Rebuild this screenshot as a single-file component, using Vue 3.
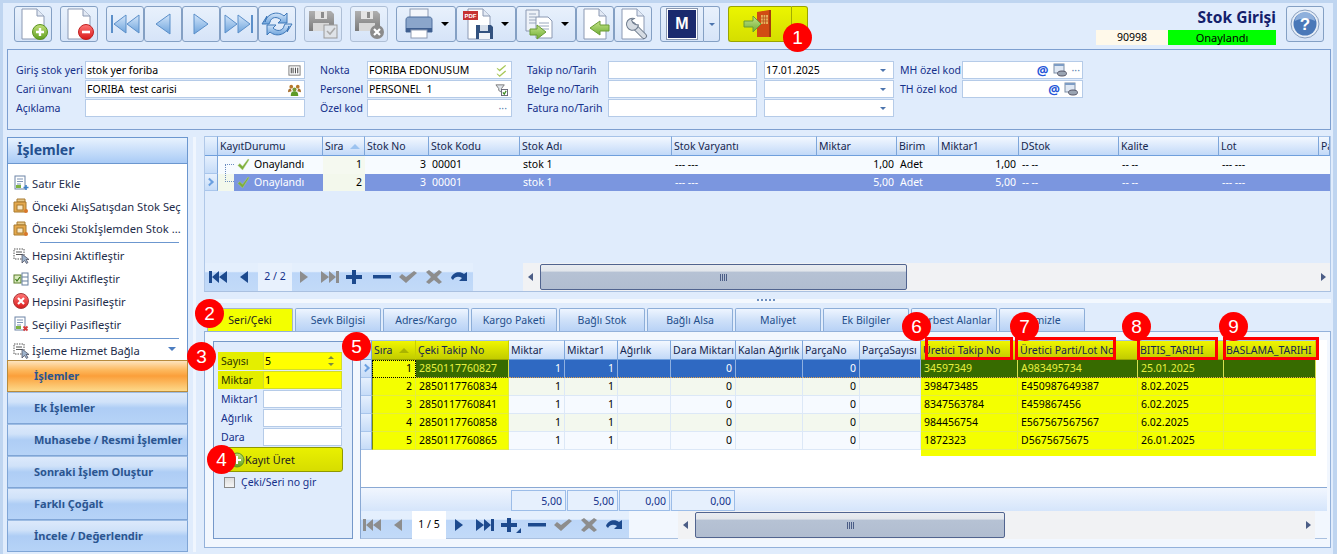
<script setup>
// Columns of the upper grid (stock lines)
const lineCols = [
  { t: 'KayıtDurumu', w: 105 },
  { t: 'Sıra', w: 42, sort: true },
  { t: 'Stok No', w: 64 },
  { t: 'Stok Kodu', w: 91 },
  { t: 'Stok Adı', w: 152 },
  { t: 'Stok Varyantı', w: 145 },
  { t: 'Miktar', w: 80 },
  { t: 'Birim', w: 42 },
  { t: 'Miktar1', w: 80 },
  { t: 'DStok', w: 100 },
  { t: 'Kalite', w: 100 },
  { t: 'Lot', w: 100 },
  { t: 'Pa', w: 11 }
]

const lineRows = [
  { no: '1', qty: '1,00', selected: false },
  { no: '2', qty: '5,00', selected: true }
]

// Columns of the lower grid (serial numbers)
const serialCols = [
  { t: 'Sıra', w: 44, sort: true, mark: true, right: true },
  { t: 'Çeki Takip No', w: 93, mark: true },
  { t: 'Miktar', w: 56, right: true },
  { t: 'Miktar1', w: 53, right: true },
  { t: 'Ağırlık', w: 53 },
  { t: 'Dara Miktarı', w: 65, right: true },
  { t: 'Kalan Ağırlık', w: 67 },
  { t: 'ParçaNo', w: 57, right: true },
  { t: 'ParçaSayısı', w: 61 },
  { t: 'Üretici Takip No', w: 97, mark: true },
  { t: 'Üretici Parti/Lot No', w: 120, mark: true },
  { t: 'BITIS_TARIHI', w: 86, mark: true },
  { t: 'BASLAMA_TARIHI', w: 92, mark: true }
]

const serialRows = [
  ['1', '2850117760827', '1', '1', '', '0', '', '0', '', '34597349', 'A983495734', '25.01.2025', ''],
  ['2', '2850117760834', '1', '1', '', '0', '', '0', '', '398473485', 'E450987649387', '8.02.2025', ''],
  ['3', '2850117760841', '1', '1', '', '0', '', '0', '', '8347563784', 'E459867456', '6.02.2025', ''],
  ['4', '2850117760858', '1', '1', '', '0', '', '0', '', '984456754', 'E567567567567', '6.02.2025', ''],
  ['5', '2850117760865', '1', '1', '', '0', '', '0', '', '1872323', 'D5675675675', '26.01.2025', '']
]

const tabs = ['Seri/Çeki', 'Sevk Bilgisi', 'Adres/Kargo', 'Kargo Paketi', 'Bağlı Stok', 'Bağlı Alsa', 'Maliyet', 'Ek Bilgiler', 'Serbest Alanlar', 'Temizle']
const sideNav = ['İşlemler', 'Ek İşlemler', 'Muhasebe / Resmi İşlemler', 'Sonraki İşlem Oluştur', 'Farklı Çoğalt', 'İncele / Değerlendir']
const totals = [{ v: '5,00', w: 55 }, { v: '5,00', w: 51 }, { v: '0,00', w: 51 }, { v: '0,00', w: 64 }]

// Record navigator glyphs, all in a 20x16 box
const navPaths = {
  first: 'M1 2h3v12H1zM11 2v12L4 8zM19 2v12l-8-6z',
  prev: 'M14 2v12L6 8z',
  next: 'M6 2v12l8-6z',
  last: 'M1 2v12l8-6zM9 2v12l7-6zM16 2h3v12h-3z',
  plus: 'M6 1h4v5h6v4h-6v5H6v-5H0V6h6z',
  plusMark: 'M6 1h4v5h6v4h-6v5H6v-5H0V6h6zM20 11v5h-5z',
  minus: 'M1 6h18v3.5H1z',
  check: 'M1 8l3-3 4 3 8-6 3 2-11 10z',
  cross: 'M2 3l3-2 5 4 5-4 3 2-5 5 5 5-3 2-5-4-5 4-3-2 5-5z',
  redo: 'M1 9c2-6 9-7 13-4l3-2v9h-8l3-3c-3-2-7-2-9 2z'
}
const topNavLeft = [{ n: 'first', c: '#1d4a8e' }, { n: 'prev', c: '#1d4a8e' }]
const topNavRight = [{ n: 'next', c: '#8d8d8d' }, { n: 'last', c: '#8d8d8d' }, { n: 'plus', c: '#1d4a8e' }, { n: 'minus', c: '#1d4a8e' }, { n: 'check', c: '#8d8d8d' }, { n: 'cross', c: '#8d8d8d' }, { n: 'redo', c: '#1d4a8e' }]
const lowNavLeft = [{ n: 'first', c: '#8d8d8d' }, { n: 'prev', c: '#8d8d8d' }]
const lowNavRight = [{ n: 'next', c: '#1d4a8e' }, { n: 'last', c: '#1d4a8e' }, { n: 'plusMark', c: '#1d4a8e' }, { n: 'minus', c: '#1d4a8e' }, { n: 'check', c: '#8d8d8d' }, { n: 'cross', c: '#8d8d8d' }, { n: 'redo', c: '#1d4a8e' }]
</script>

<template>
  <div class="page">
    <!-- Shared gradients and symbols -->
    <svg class="defs" aria-hidden="true">
      <defs>
        <linearGradient id="blueArrow" x1="0" y1="0" x2="0" y2="1"><stop offset="0" stop-color="#d4e6fa" /><stop offset="1" stop-color="#6ea4dc" /></linearGradient>
        <linearGradient id="greenBall" x1="0" y1="0" x2="0" y2="1"><stop offset="0" stop-color="#c3e07a" /><stop offset="1" stop-color="#5f9e20" /></linearGradient>
        <linearGradient id="redBall" x1="0" y1="0" x2="0" y2="1"><stop offset="0" stop-color="#f77" /><stop offset="1" stop-color="#d81818" /></linearGradient>
        <linearGradient id="greyBox" x1="0" y1="0" x2="0" y2="1"><stop offset="0" stop-color="#b0b0b0" /><stop offset="1" stop-color="#7a7a7a" /></linearGradient>
        <linearGradient id="arrowGreen" x1="0" y1="0" x2="0" y2="1"><stop offset="0" stop-color="#c6e48a" /><stop offset="1" stop-color="#6fae35" /></linearGradient>
        <symbol id="doc" viewBox="0 0 32 32">
          <path d="M5 1h15l7 7v23H5z" fill="#fff" stroke="#8b99b3" />
          <path d="M20 1v7h7" fill="#e2e9f4" stroke="#8b99b3" />
        </symbol>
        <symbol id="floppy" viewBox="0 0 32 32">
          <path d="M2 3h22l3 3v17H2z" fill="url(#greyBox)" />
          <rect x="8" y="3" width="12" height="8" fill="#e4e4e4" />
          <rect x="14" y="4" width="3" height="6" fill="#8c8c8c" />
          <rect x="6" y="15" width="16" height="8" fill="#d8d8d8" />
        </symbol>
      </defs>
    </svg>

    <!-- Top toolbar -->
    <header class="toolbar">
      <button class="tool">
        <svg viewBox="0 0 32 32"><use href="#doc" /><circle cx="23" cy="24" r="7.5" fill="url(#greenBall)" stroke="#5c9421" /><path d="M23 20v8M19 24h8" stroke="#fff" stroke-width="2.4" /></svg>
      </button>
      <button class="tool">
        <svg viewBox="0 0 32 32"><use href="#doc" /><circle cx="23" cy="24" r="7.5" fill="url(#redBall)" stroke="#c02020" /><path d="M19 24h8" stroke="#fff" stroke-width="2.6" /></svg>
      </button>
      <div class="tool-group">
        <button class="tool">
          <svg viewBox="0 0 32 32"><path d="M2 7h2v18H2z" fill="#5b8fc9" /><path d="M17 7v18L5 16z" fill="url(#blueArrow)" stroke="#5b8fc9" /><path d="M30 7v18L18 16z" fill="url(#blueArrow)" stroke="#5b8fc9" /></svg>
        </button>
        <button class="tool">
          <svg viewBox="0 0 32 32"><path d="M23 6v20L9 16z" fill="url(#blueArrow)" stroke="#5b8fc9" /></svg>
        </button>
        <button class="tool">
          <svg viewBox="0 0 32 32"><path d="M9 6v20l14-10z" fill="url(#blueArrow)" stroke="#5b8fc9" /></svg>
        </button>
        <button class="tool">
          <svg viewBox="0 0 32 32"><path d="M2 7v18l12-9z" fill="url(#blueArrow)" stroke="#5b8fc9" /><path d="M15 7v18l12-9z" fill="url(#blueArrow)" stroke="#5b8fc9" /><path d="M28 7h2v18h-2z" fill="#5b8fc9" /></svg>
        </button>
        <button class="tool">
          <svg viewBox="0 0 32 32"><path d="M4 14C6 6 16 2 23 8l3-3v10h-9l3-3C16 8 10 9 9 14l-1 2H1l5-8z" fill="url(#blueArrow)" stroke="#3f78b8" /><path d="M28 18C26 26 16 30 9 24l-3 3V17h9l-3 3c4 4 10 3 11-2l1-2h7l-5 8z" fill="url(#blueArrow)" stroke="#3f78b8" /></svg>
        </button>
      </div>
      <button class="tool faded">
        <svg viewBox="0 0 32 32"><use href="#floppy" /><rect x="17" y="17" width="13" height="13" fill="#dfe3e8" stroke="#999" /><path d="M20 23l3 3 5-6" fill="none" stroke="#aaa" stroke-width="1.6" /></svg>
      </button>
      <button class="tool faded">
        <svg viewBox="0 0 32 32"><use href="#floppy" /><circle cx="24" cy="24" r="7" fill="#8b8b8b" /><path d="M21 21l6 6M27 21l-6 6" stroke="#fff" stroke-width="2.2" /></svg>
      </button>
      <div class="tool-group">
        <button class="tool wide">
          <svg viewBox="0 0 32 32"><rect x="7" y="1" width="18" height="10" fill="#f3f6fb" stroke="#8e9cb4" /><path d="M3 12c0-2 1-3 3-3h20c2 0 3 1 3 3v12H3z" fill="#8ba6cb" stroke="#4f6f9e" /><path d="M3 20h26v4H3z" fill="#3f5f90" /><rect x="8" y="22" width="16" height="8" fill="#fff" stroke="#8e9cb4" /></svg>
          <i class="caret" />
        </button>
        <button class="tool wide">
          <svg viewBox="0 0 32 32"><use href="#doc" /><rect x="0" y="3" width="15" height="9" fill="#c63232" /><text x="1.5" y="10" class="pdf">PDF</text><path d="M13 17h15l2 2v12H13z" fill="#33527f" /><rect x="17" y="17" width="8" height="6" fill="#d5deea" /><rect x="16" y="25" width="11" height="6" fill="#f0f3f8" /></svg>
          <i class="caret" />
        </button>
        <button class="tool wide">
          <svg viewBox="0 0 32 32"><path d="M3 2h13v21H3z" fill="#eef2f8" stroke="#8b99b3" /><path d="M6 6h7M6 9h7M6 12h7M6 15h7" stroke="#9aa8be" /><path d="M13 9h12l4 4v17H13z" fill="#fff" stroke="#8b99b3" /><path d="M16 15h10M16 18h10M16 21h10" stroke="#9aa8be" /><path d="M7 21h7v-4l9 7-9 7v-4H7z" fill="url(#arrowGreen)" stroke="#6a9c35" /></svg>
          <i class="caret" />
        </button>
        <button class="tool">
          <svg viewBox="0 0 32 32"><use href="#doc" /><path d="M30 17h-9v-4l-10 7 10 7v-4h9z" fill="url(#arrowGreen)" stroke="#6a9c35" /></svg>
        </button>
        <button class="tool">
          <svg viewBox="0 0 32 32">
            <use href="#doc" />
            <path d="M16 17l11 11" stroke="#6d7a8c" stroke-width="6" stroke-linecap="round" />
            <path d="M16 17l11 11" stroke="#d5dbe3" stroke-width="4" stroke-linecap="round" />
            <path d="M18 11a6 6 0 1 0 3 7l-3-1-2-2-1-3z" transform="rotate(-10 15 15)" fill="#d5dbe3" stroke="#6d7a8c" />
          </svg>
        </button>
      </div>
      <div class="tool-group">
        <button class="tool m-tool"><span class="m-logo">M</span></button>
        <button class="tool m-arrow"><i class="caret small" /></button>
      </div>
      <div class="exit-group">
        <button class="exit-main">
          <svg viewBox="0 0 32 32">
            <path d="M14 4l12-2v27l-12 0z" fill="#d14b13" />
            <path d="M26 2h2v27h-2z" fill="#a33b0f" />
            <rect x="18" y="7" width="7" height="9" fill="#e9b05c" />
            <path d="M20.3 7v9M22.6 7v9M18 10h7M18 13h7" stroke="#b5521a" stroke-width=".8" />
            <path d="M1 13h9V8l8 8-8 8v-5H1z" fill="url(#arrowGreen)" stroke="#6a9c35" />
          </svg>
        </button>
        <button class="exit-side" />
      </div>

      <!-- Document title and state -->
      <div class="doc-state">
        <div class="doc-title">Stok Girişi</div>
        <div class="doc-chips">
          <span class="chip-no">90998</span>
          <span class="chip-state">Onaylandı</span>
        </div>
      </div>
      <button class="tool help">
        <svg viewBox="0 0 32 32"><circle cx="16" cy="16" r="14" fill="#e6edf6" stroke="#8aa0c0" /><circle cx="16" cy="16" r="11.5" fill="#4a78b8" /><path d="M6 13a10 9 0 0 1 20 0c-5-3-15-3-20 0z" fill="#8fb0dc" /><text x="16" y="22" class="qmark">?</text></svg>
      </button>
    </header>

    <!-- Document header form -->
    <section class="head-form">
      <div class="form-col col-a">
        <label>Giriş stok yeri</label>
        <div class="box">stok yer foriba
          <svg class="trail" viewBox="0 0 14 14"><rect x="1" y="2" width="12" height="10" fill="#fff" stroke="#777" /><path d="M3.5 4v6M5.5 4v6M8 4v6M10.5 4v6" stroke="#333" /></svg>
        </div>
        <label>Cari ünvanı</label>
        <div class="box">FORIBA&nbsp; test carisi
          <svg class="trail" viewBox="0 0 14 14"><circle cx="3.5" cy="4" r="2" fill="#b7782a" /><circle cx="10.5" cy="4" r="2" fill="#b7782a" /><circle cx="7" cy="7" r="2.2" fill="#7a9a35" /><path d="M3 14c0-4 1.5-5 4-5s4 1 4 5z" fill="#5d9a28" /><path d="M0 10c0-3 1-4 3-4l1 3zM14 10c0-3-1-4-3-4l-1 3z" fill="#a87030" /></svg>
        </div>
        <label>Açıklama</label>
        <div class="box" />
      </div>
      <div class="form-col col-b">
        <label>Nokta</label>
        <div class="box">FORIBA EDONUSUM
          <svg class="trail" viewBox="0 0 14 14"><path d="M2 4l3 2 6-5 1 1-7 6-3-3zM2 10l3 2 6-5 1 1-7 6-3-3z" fill="#a9c85a" /></svg>
        </div>
        <label>Personel</label>
        <div class="box">PERSONEL&nbsp; 1
          <svg class="trail" viewBox="0 0 14 14"><path d="M1 2h9L7 6v4L4 8V6z" fill="#dfe4ea" stroke="#777" /><rect x="7" y="7" width="6.5" height="6.5" fill="#fff" stroke="#667" /><path d="M8.5 10l1.5 2 2-3.5" stroke="#3b8a22" stroke-width="1.3" fill="none" /></svg>
        </div>
        <label>Özel kod</label>
        <div class="box"><span class="dots">···</span></div>
      </div>
      <div class="form-col col-c">
        <label>Takip no/Tarih</label>
        <div class="box" />
        <div class="box combo">17.01.2025<i class="combo-arrow" /></div>
        <label>Belge no/Tarih</label>
        <div class="box" />
        <div class="box combo"><i class="combo-arrow" /></div>
        <label>Fatura no/Tarih</label>
        <div class="box" />
        <div class="box combo"><i class="combo-arrow" /></div>
      </div>
      <div class="form-col col-d">
        <label>MH özel kod</label>
        <div class="box">
          <span class="trail at">@</span>
          <svg class="eye" viewBox="0 0 14 14"><rect x="1" y="1" width="10" height="9" fill="#dfe8f4" stroke="#7d8ea6" /><rect x="1" y="1" width="10" height="2" fill="#7d9cc4" /><ellipse cx="9" cy="10.5" rx="4.5" ry="2.5" fill="#9aa4b2" stroke="#556" /></svg>
          <span class="dots">···</span>
        </div>
        <label>TH özel kod</label>
        <div class="box">
          <span class="trail at">@</span>
          <svg class="eye" viewBox="0 0 14 14"><rect x="1" y="1" width="10" height="9" fill="#dfe8f4" stroke="#7d8ea6" /><rect x="1" y="1" width="10" height="2" fill="#7d9cc4" /><ellipse cx="9" cy="10.5" rx="4.5" ry="2.5" fill="#9aa4b2" stroke="#556" /></svg>
        </div>
      </div>
    </section>

    <div class="work">
      <!-- Left side actions -->
      <aside class="side">
        <div class="side-title">İşlemler</div>
        <div class="side-list">
          <div class="side-item">
            <svg viewBox="0 0 16 16"><rect x="2" y="1" width="10" height="13" fill="#fff" stroke="#6d84a6" /><path d="M4 4h6M4 6.5h6M4 9h4" stroke="#7f95b5" /><rect x="3" y="10" width="5" height="3" fill="#7cb342" /><path d="M13 10v5M10.5 12.5h5" stroke="#3c7fc6" stroke-width="1.6" /></svg>
            Satır Ekle
          </div>
          <div class="side-item">
            <svg viewBox="0 0 16 16"><path d="M4 1h8v3H4z" fill="#e8c98a" stroke="#a87a30" /><path d="M1 4h12v10H1z" fill="#e5a94d" stroke="#a87a30" /><rect x="4" y="7" width="6" height="5" fill="#f7e7c5" stroke="#a87a30" /><circle cx="13" cy="13" r="2" fill="#d9772a" /></svg>
            Önceki AlışSatışdan Stok Seç
          </div>
          <div class="side-item">
            <svg viewBox="0 0 16 16"><path d="M4 1h8v3H4z" fill="#e8c98a" stroke="#a87a30" /><path d="M1 4h12v10H1z" fill="#e5a94d" stroke="#a87a30" /><rect x="4" y="7" width="6" height="5" fill="#f7e7c5" stroke="#a87a30" /><circle cx="13" cy="13" r="2" fill="#d9772a" /></svg>
            Önceki Stokİşlemden Stok ...
          </div>
          <div class="side-line" />
          <div class="side-item">
            <svg viewBox="0 0 16 16"><rect x="1" y="1" width="10" height="10" fill="#fff" stroke="#555" stroke-dasharray="1.5 1" /><path d="M3 4h6M3 6.5h6" stroke="#555" /><path d="M9 6v9l2.5-2.5 2 3 1.5-1-2-3H16z" fill="#9fb4cc" stroke="#445" stroke-width=".7" /></svg>
            Hepsini Aktifleştir
          </div>
          <div class="side-item">
            <svg viewBox="0 0 16 16"><rect x="1" y="4" width="7" height="8" fill="#dcecc0" stroke="#5a7d2a" /><path d="M2.5 8l1.5 2 3-4" stroke="#3f7a18" stroke-width="1.2" fill="none" /><rect x="9" y="2" width="6" height="12" fill="#fff" stroke="#67809f" /><path d="M9 6h6M9 10h6" stroke="#67809f" /></svg>
            Seçiliyi Aktifleştir
          </div>
          <div class="side-item">
            <svg viewBox="0 0 16 16"><circle cx="8" cy="8" r="7.5" fill="url(#redBall)" stroke="#a83a3a" /><path d="M5 5l6 6M11 5l-6 6" stroke="#fff" stroke-width="2.2" /></svg>
            Hepsini Pasifleştir
          </div>
          <div class="side-item">
            <svg viewBox="0 0 16 16"><rect x="2" y="1" width="10" height="13" fill="#fff" stroke="#6d84a6" /><path d="M4 4h6M4 6.5h6M4 9h4" stroke="#7f95b5" /><rect x="3" y="10" width="5" height="3" fill="#7cb342" /><path d="M10.5 10.5l4 4M14.5 10.5l-4 4" stroke="#d83a3a" stroke-width="1.8" /></svg>
            Seçiliyi Pasifleştir
          </div>
          <div class="side-line" />
          <div class="side-item last">
            <svg viewBox="0 0 16 16"><rect x="1" y="1" width="10" height="10" fill="#fff" stroke="#555" stroke-dasharray="1.5 1" /><path d="M3 4h6M3 6.5h6" stroke="#555" /><path d="M9 6v9l2.5-2.5 2 3 1.5-1-2-3H16z" fill="#9fb4cc" stroke="#445" stroke-width=".7" /></svg>
            İşleme Hizmet Bağla
            <i class="more" />
          </div>
        </div>
        <div v-for="(item, i) in sideNav" :key="item" class="side-nav" :class="{ active: i === 0 }">{{ item }}</div>
      </aside>

      <div class="divider" />

      <main class="content">
        <!-- Stock lines grid -->
        <section class="line-grid">
          <div class="grid-head">
            <span class="head-ind" />
            <span v-for="col in lineCols" :key="col.t" class="head-cell" :style="{ width: col.w + 'px' }">
              {{ col.t }}<i v-if="col.sort" class="sort" />
            </span>
          </div>
          <div v-for="row in lineRows" :key="row.no" class="line-row" :class="{ picked: row.selected }">
            <span class="row-ind"><i v-if="row.selected" class="chev" /></span>
            <span class="cell state c-105">
              <i class="tree" :class="{ up: row.selected }" />
              <span class="state-in">
                <svg viewBox="0 0 14 14"><path d="M1 8l2-2 3 3 6-8 1 1-7 11z" fill="#7cae3a" stroke="#b7d48a" stroke-width=".5" /></svg>
                Onaylandı
              </span>
            </span>
            <span class="cell num no-cell c-42">{{ row.no }}</span>
            <span class="cell num c-64">3</span>
            <span class="cell c-91">00001</span>
            <span class="cell c-152">stok 1</span>
            <span class="cell c-145">--- ---</span>
            <span class="cell num c-80">{{ row.qty }}</span>
            <span class="cell c-42">Adet</span>
            <span class="cell num c-80">{{ row.qty }}</span>
            <span class="cell c-100">-- --</span>
            <span class="cell c-100">-- --</span>
            <span class="cell c-100">--- ---</span>
            <span class="cell fill" />
          </div>
          <div class="grid-spacer" />
          <div class="grid-foot">
            <div class="navigator">
              <svg v-for="b in topNavLeft" :key="b.n" class="nav-btn" viewBox="0 0 20 16"><path :d="navPaths[b.n]" :fill="b.c" /></svg>
              <span class="pager">2 / 2</span>
              <svg v-for="b in topNavRight" :key="b.n" class="nav-btn" viewBox="0 0 20 16"><path :d="navPaths[b.n]" :fill="b.c" /></svg>
            </div>
            <div class="scroll top-scroll">
              <i class="scroll-left" />
              <div class="thumb"><i class="grip" /></div>
              <i class="scroll-right" />
            </div>
          </div>
        </section>

        <div class="splitter"><i class="split-dots" /></div>

        <!-- Tab strip -->
        <nav class="tabs">
          <button v-for="(tab, i) in tabs" :key="tab" class="tab" :class="{ current: i === 0 }">{{ tab }}</button>
        </nav>

        <section class="tab-panel">
          <div class="generate">
            <div class="gen-form">
              <label class="hot">Sayısı</label>
              <div class="gen-box hot-box">5<span class="spin"><i /><i /></span></div>
              <label class="hot">Miktar</label>
              <div class="gen-box hot-box">1</div>
              <label>Miktar1</label>
              <div class="gen-box" />
              <label>Ağırlık</label>
              <div class="gen-box" />
              <label>Dara</label>
              <div class="gen-box" />
            </div>
            <button class="gen-button">
              <svg viewBox="0 0 16 16"><circle cx="8" cy="8" r="7" fill="url(#greenBall)" stroke="#5c9421" /><path d="M8 4v8M4 8h8" stroke="#fff" stroke-width="2" /></svg>
              Kayıt Üret
            </button>
            <div class="gen-check"><i class="check-box" />Çeki/Seri no gir</div>
          </div>

          <div class="serial-grid">
            <div class="serial-head">
              <span class="head-ind" />
              <span
                v-for="col in serialCols"
                :key="col.t"
                class="head-cell"
                :class="{ hot: col.mark }"
                :style="{ width: col.w + 'px' }"
              >{{ col.t }}<i v-if="col.sort" class="sort olive" /></span>
            </div>
            <div class="serial-body">
              <div v-for="(row, r) in serialRows" :key="row[0]" class="serial-row" :class="{ picked: r === 0, odd: r % 2 === 1 }">
                <span class="row-ind"><i v-if="r === 0" class="chev" /></span>
                <span
                  v-for="(col, c) in serialCols"
                  :key="col.t"
                  class="cell"
                  :class="{ num: col.right, hot: col.mark, first: c === 0 }"
                  :style="{ width: col.w + 'px' }"
                >{{ row[c] }}</span>
              </div>
              <div class="yellow-tail" />
            </div>
            <div class="sums">
              <span v-for="(sum, i) in totals" :key="i" class="sum" :style="{ width: sum.w + 'px' }">{{ sum.v }}</span>
            </div>
            <div class="grid-foot low">
              <div class="navigator low-nav">
                <svg v-for="b in lowNavLeft" :key="b.n" class="nav-btn" viewBox="0 0 20 16"><path :d="navPaths[b.n]" :fill="b.c" /></svg>
                <span class="pager white">1 / 5</span>
                <svg v-for="b in lowNavRight" :key="b.n" class="nav-btn" viewBox="0 0 20 16"><path :d="navPaths[b.n]" :fill="b.c" /></svg>
              </div>
              <div class="scroll low-scroll">
                <i class="scroll-left" />
                <div class="thumb"><i class="grip" /></div>
                <i class="scroll-right" />
              </div>
            </div>
          </div>
        </section>
      </main>
    </div>

    <!-- Callouts drawn over the screenshot -->
    <span class="frame f6" /><span class="frame f7" /><span class="frame f8" /><span class="frame f9" />
    <span class="badge b1">1</span>
    <span class="badge b2">2</span>
    <span class="badge b3">3</span>
    <span class="badge b4">4</span>
    <span class="badge b5">5</span>
    <span class="badge b6">6</span>
    <span class="badge b7">7</span>
    <span class="badge b8">8</span>
    <span class="badge b9">9</span>
  </div>
</template>

<style>
html, body { margin: 0; background: #e0ecfc; }
</style>

<style scoped>
* { box-sizing: border-box; }

.page {
  position: relative;
  width: 1337px;
  height: 554px;
  overflow: hidden;
  background: #e0ecfc;
  border-top: 3px solid #bfd5f0;
  border-left: 3px solid #bfd5f0;
  border-right: 4px solid #bfd5f0;
  font-family: "Noto Sans", "DejaVu Sans", sans-serif;
  font-size: 10.5px;
  color: #000;
}

.defs { position: absolute; width: 0; height: 0; }

button { font: inherit; padding: 0; }

/* toolbar */
.toolbar {
  display: flex;
  height: 46px;
  padding: 3px 0 0 11px;
  gap: 8px;
}

.tool {
  display: flex;
  align-items: center;
  justify-content: center;
  width: 38px;
  height: 36px;
  background: linear-gradient(#e8f1fc, #d6e4f8);
  border: 1px solid #84a0c4;
  border-radius: 3px;
}

.tool svg { width: 32px; height: 32px; }
.tool.faded { border-color: #aebfd6; }
.tool.wide { width: 60px; justify-content: flex-start; padding-left: 6px; gap: 6px; }

.tool-group { display: flex; }

.caret {
  width: 0;
  height: 0;
  border: 4px solid transparent;
  border-top: 4px solid #000;
  border-bottom: 0;
}
.caret.small { border-top-color: #4c74ad; border-width: 3px 3px 0; }

.tool.m-tool { width: 44px; border-radius: 3px 0 0 3px; }
.m-logo {
  display: flex;
  align-items: center;
  justify-content: center;
  width: 30px;
  height: 30px;
  background: #1a2a6e;
  outline: 1px solid #8a98b0;
  border: 1px solid #fff;
  color: #fff;
  font-family: "Liberation Sans", sans-serif;
  font-weight: bold;
  font-size: 16px;
}
.tool.m-arrow { width: 16px; border-left: 0; border-radius: 0 3px 3px 0; }

.pdf { font: bold 6px "Liberation Sans", sans-serif; fill: #fff; }
.qmark { font: bold 17px "Liberation Sans", sans-serif; fill: #fff; text-anchor: middle; }

.exit-group { display: flex; }
.exit-main, .exit-side {
  height: 36px;
  background: linear-gradient(#ebf500, #d5de00);
  border: 1px solid #9aa500;
}
.exit-main { width: 64px; border-radius: 3px 0 0 3px; border-right-color: #a3ad00; }
.exit-main svg { width: 32px; height: 32px; display: block; margin: 0 0 0 14px; }
.exit-side { width: 16px; border-left: 0; border-radius: 0 3px 3px 0; }

.doc-state { margin-left: auto; width: 180px; display: flex; flex-direction: column; align-items: flex-end; padding-top: 2px; }
.doc-title { font-size: 15.5px; font-weight: bold; color: #13206b; line-height: 19px; height: 19px; }
.doc-chips { display: flex; margin-top: 3px; line-height: 15px; }
.chip-no { width: 72px; background: #fff9ea; text-align: center; }
.chip-state { width: 108px; background: #00ff00; text-align: center; font-size: 11px; }
.tool.help { margin: 0 9px 0 2px; }

/* header form */
.head-form {
  display: flex;
  margin: 0 0 0 4px;
  height: 81px;
  width: 1324px;
  padding: 11px 0 0 8px;
  border: 1px solid #7d9fd0;
  color: #15308a;
  align-items: flex-start;
}
.form-col {
  display: grid;
  grid-auto-rows: 18px;
  row-gap: 1px;
  align-items: center;
}
.form-col label { white-space: nowrap; }
.col-a { grid-template-columns: 69px 220px; }
.col-b { grid-template-columns: 47px 145px; margin-left: 15px; }
.col-c { grid-template-columns: 81px 149px 137px; margin-left: 15px; }
.col-c .combo { margin-left: 7px; width: 130px; }
.col-d { grid-template-columns: 62px 121px; margin-left: 6px; }

.box {
  position: relative;
  display: flex;
  align-items: center;
  height: 18px;
  background: #fff;
  border: 1px solid #b5cbe8;
  padding: 0 2px 0 1px;
  color: #000;
  white-space: nowrap;
  overflow: hidden;
}
.trail { margin-left: auto; width: 13px; height: 13px; flex: none; margin-right: 1px; }
.at { width: auto; height: auto; color: #2456d8; font-size: 13px; font-weight: bold; margin-right: 4px; }
.eye { width: 14px; height: 14px; margin-right: 2px; flex: none; }
.dots { margin-left: 3px; color: #5d7fb0; }
.col-b .dots { margin-left: auto; margin-right: 2px; }
.combo-arrow {
  position: absolute;
  right: 7px;
  top: 7px;
  border: 3px solid transparent;
  border-top: 3px solid #4c74ad;
  border-bottom: 0;
}

/* work area */
.work { display: flex; margin-top: 7px; margin-left: 4px; }

.side { width: 181px; flex: none; }
.side-title {
  height: 27px;
  padding: 2px 0 0 9px;
  font-size: 14px;
  font-weight: bold;
  line-height: 19px;
  color: #24508f;
  background: linear-gradient(#e8f2fe, #a9cbf6);
  border: 1px solid #6c97cf;
}
.side-list {
  position: relative;
  height: 196px;
  padding-top: 8px;
  background: #fff;
  border-left: 1px solid #6c97cf;
  border-right: 1px solid #6c97cf;
}
.side-item {
  display: flex;
  align-items: center;
  height: 22.8px;
  padding-left: 5px;
  gap: 3px;
  white-space: nowrap;
  font-size: 11.2px;
  color: #1d2c4a;
}
.side-item svg { width: 16px; height: 16px; flex: none; }
.side-line { height: 1px; margin: 2px 8px 1px 32px; background: #6c97cf; }
.more {
  position: absolute;
  right: 11px;
  bottom: 9px;
  border: 4px solid transparent;
  border-top: 4px solid #4c7dc0;
  border-bottom: 0;
}
.side-nav {
  height: 32px;
  padding-left: 26px;
  line-height: 30px;
  font-size: 11px;
  font-weight: bold;
  color: #2b5590;
  white-space: nowrap;
  border: 1px solid #7fa5d6;
  border-top: 1px solid #9dbce3;
  background: linear-gradient(#dce9fb 0, #d0e2f9 30%, #aecdf5 50%, #b6d3f7 100%);
}
.side-nav.active {
  border-color: #b88b3c;
  background: linear-gradient(#fde4bf 0, #fdb95e 30%, #fb9f3a 50%, #fdd98a 100%);
}

.divider { width: 16px; flex: none; position: relative; }
.divider::after {
  content: "";
  position: absolute;
  left: 5px;
  top: 0;
  bottom: 0;
  width: 3px;
  background: #f0f6fe;
}

.content { width: 1127px; display: flex; flex-direction: column; }

/* upper grid */
.line-grid {
  height: 156px;
  display: flex;
  flex-direction: column;
  border-bottom: 1px solid #a9c0e0;
  border-left: 1px solid #b0c8e8;
  border-right: 1px solid #b0c8e8;
  margin-top: -1px;
}
.grid-head, .serial-head { display: flex; height: 20px; flex: none; overflow: hidden; }
.head-ind {
  width: 13px;
  flex: none;
  background: linear-gradient(#eaf3fe, #c4dbf8);
  border-top: 1px solid #a6c3e8;
  border-right: 1px solid #7ea6da;
  border-bottom: 1px solid #6f9fdc;
}
.serial-head .head-ind { width: 12px; }
.head-cell {
  display: flex;
  align-items: center;
  flex: none;
  padding-left: 2px;
  white-space: nowrap;
  overflow: hidden;
  color: #16274f;
  background: linear-gradient(#f3f8ff, #c2d9f8);
  border-top: 1px solid #a6c3e8;
  border-right: 1px solid #7ea6da;
  border-bottom: 1px solid #6f9fdc;
}
.head-cell.hot {
  background: linear-gradient(#f0f600, #c2cc00);
  border-right-color: #c9d000;
  border-bottom-color: #9aa500;
}
.sort {
  margin-left: 6px;
  border: 5px solid transparent;
  border-top: 0;
  border-bottom: 5px solid #9cc3f0;
}
.sort.olive { border-bottom-color: #aab400; }

.line-row { display: flex; height: 17.5px; flex: none; background: #f7fbff; }
.row-ind {
  position: relative;
  width: 13px;
  flex: none;
  background: linear-gradient(#e6f0fd, #c6dcf8);
  border-right: 1px solid #7ea6da;
  border-bottom: 1px solid #a9c6ec;
}
.chev {
  position: absolute;
  left: 3px;
  top: 5px;
  width: 6px;
  height: 6px;
  border-top: 2px solid #6ba0e0;
  border-right: 2px solid #6ba0e0;
  transform: rotate(45deg) translate(-1px, 1px);
}
.cell {
  display: block;
  flex: none;
  padding: 0 3px;
  line-height: 17px;
  white-space: nowrap;
  overflow: hidden;
}
.cell.num { text-align: right; }
.cell.fill { flex: 1; }
.c-42 { width: 42px; }
.c-64 { width: 64px; }
.c-80 { width: 80px; }
.c-91 { width: 91px; }
.c-100 { width: 100px; }
.c-105 { width: 105px; }
.c-145 { width: 145px; }
.c-152 { width: 152px; }
.line-row.picked { background: #7b96df; color: #fff; }
.line-row.picked .no-cell { background: #f3f8ec; color: #000; }
.line-row .no-cell { background: #f5f9f0; }
.state { position: relative; padding: 0; display: flex; }
.state-in { display: flex; align-items: center; gap: 4px; margin-left: 16px; padding-left: 3px; flex: 1; }
.state-in svg { width: 13px; height: 13px; flex: none; }
.line-row:not(.picked) .state { background: #f7fbff; }
.line-row.picked .state { background: #f3f8ec; }
.line-row.picked .state-in { background: #7b96df; }
.tree {
  position: absolute;
  left: 7px;
  top: 8px;
  width: 9px;
  height: 18px;
  border-left: 1px dotted #6b8cc0;
  border-top: 1px dotted #6b8cc0;
}
.tree.up { top: -8px; height: 16px; border-top: 0; border-bottom: 1px dotted #6b8cc0; z-index: 1; }

.grid-spacer { flex: 1; }
.grid-foot { display: flex; height: 28px; flex: none; justify-content: space-between; }
.navigator {
  display: flex;
  align-items: center;
  width: 268px;
  padding-left: 3px;
  background: linear-gradient(#e4effd 0, #e4effd 30%, #bcd6f8 35%, #c2daf8 100%);
}
.nav-btn { width: 20px; height: 16px; margin-right: 6px; flex: none; }
.pager {
  height: 28px;
  width: 34px;
  flex: none;
  margin: 0 2px 0 -2px;
  text-align: center;
  line-height: 26px;
  white-space: nowrap;
  color: #13308a;
  background: #e8f1fd;
}
.pager.white { background: #fff; color: #000; margin: 0 3px 0 -2px; }

.scroll {
  position: relative;
  display: flex;
  align-items: center;
  height: 28px;
  background: #f1f2f4;
}
.top-scroll { width: 807px; }
.scroll-left, .scroll-right {
  position: absolute;
  top: 10px;
  border: 4px solid transparent;
}
.scroll-left { left: 5px; border-left: 0; border-right: 5px solid #4b5d86; }
.scroll-right { right: 4px; border-right: 0; border-left: 5px solid #4b5d86; }
.thumb {
  position: absolute;
  left: 17px;
  top: 1px;
  bottom: 1px;
  width: 367px;
  display: flex;
  align-items: center;
  justify-content: center;
  background: linear-gradient(#e9ecf1 0, #e2e6eb 25%, #b6c2d4 30%, #b1bdd0 100%);
  border: 1px solid #51648f;
  border-radius: 2px;
}
.grip {
  width: 7px;
  height: 7px;
  background: repeating-linear-gradient(90deg, #4b5d86 0 1px, transparent 1px 2px);
}
.low-scroll { width: 637px; margin-right: 12px; }
.low-scroll .thumb { width: 310px; }

.splitter { position: relative; height: 16px; flex: none; }
.splitter::before {
  content: "";
  position: absolute;
  left: 0;
  right: 0;
  top: 7px;
  height: 4px;
  background: #f3f8fe;
}
.split-dots {
  position: absolute;
  left: 553px;
  top: 7px;
  width: 19px;
  height: 2px;
  background: repeating-linear-gradient(90deg, #6d8fc0 0 2px, transparent 2px 4px);
}

/* tabs */
.tabs { display: flex; height: 23px; flex: none; gap: 2px; padding-left: 3px; }
.tab {
  width: 86px;
  height: 23px;
  text-align: center;
  color: #244f8c;
  background: linear-gradient(#eef5ff, #cfe1f9 50%, #b8d2f6);
  border: 1px solid #8daed8;
  border-bottom: 0;
  border-radius: 2px 2px 0 0;
  white-space: nowrap;
  overflow: hidden;
}
.tab.current { color: #222; background: #f3ff00; border-color: #a4b4c8; }

.tab-panel {
  display: flex;
  height: 217px;
  flex: none;
  padding: 8px 3px 8px 8px;
  background: #f2f7fe;
  border: 1px solid #93b1da;
  align-items: stretch;
}

.generate {
  width: 140px;
  flex: none;
  margin: 1px 7px 0 0;
  padding: 10px 0 0 4px;
  background: #e0ecfc;
  border: 1px solid #7598c9;
}
.gen-form {
  display: grid;
  grid-template-columns: 45px 79px;
  grid-auto-rows: 18px;
  row-gap: 1px;
  color: #15308a;
}
.gen-form label { padding-left: 3px; line-height: 18px; }
.gen-form label.hot { background: #e4ee00; color: #2c3500; }
.gen-box {
  position: relative;
  height: 18px;
  background: #fff;
  border: 1px solid #b5cbe8;
  padding-left: 1px;
  color: #000;
  line-height: 16px;
}
.gen-box.hot-box { background: #ffff00; border-color: #d3dc2c; }
.spin { position: absolute; right: 7px; top: 3px; display: flex; flex-direction: column; gap: 4px; }
.spin i { border: 3px solid transparent; border-bottom: 3px solid #7a8a40; border-top: 0; }
.spin i:last-child { border-top: 3px solid #7a8a40; border-bottom: 0; }
.gen-button {
  display: flex;
  align-items: center;
  gap: 0;
  width: 118px;
  height: 25px;
  margin: 1px 0 0 7px;
  padding-left: 3px;
  color: #222;
  background: linear-gradient(#e9f000, #d7dd00);
  border: 1px solid #8f9800;
  border-radius: 3px;
  font-size: 10.8px;
}
.gen-button svg { width: 16px; height: 16px; }
.gen-check { display: flex; align-items: center; gap: 6px; margin: 3px 0 0 6px; color: #15308a; }
.check-box {
  width: 11px;
  height: 11px;
  background: linear-gradient(#ddd, #f5f5f5);
  border: 1px solid #8a8a8a;
}

/* lower grid */
.serial-grid { width: 967px; flex: none; display: flex; flex-direction: column; }
.serial-head { background: #fff; }
.serial-body {
  flex: 1;
  background: #fff;
  border-left: 1px solid #8aa9d4;
}
.serial-row { display: flex; width: 955px; height: 18px; background: #f6faff; }
.serial-row .row-ind { width: 11px; }
.serial-row.odd { background: #f3f8ee; }
.serial-row .cell { border-right: 1px solid #dce8f7; border-bottom: 1px solid #dce8f7; }
.serial-row .cell.hot { background: #f4ff00; border-color: #e4ed40; }
.serial-row .cell.first { border-left: 1px solid #7f8b00; }
.serial-row.picked { background: #2f69c2; color: #fff; }
.serial-row.picked .cell { border-bottom: 1px dotted #e0a050; border-right-color: #8fb0e0; }
.serial-row.picked .cell.hot { background: #376b00; color: #e8f040; border-bottom: 1px dotted #e0a050; border-right-color: #d8e050; }
.serial-row.picked .cell.first { background: #f4ff00; color: #000; outline: 1px dotted #000; outline-offset: -1px; }
.yellow-tail { width: 395px; height: 6px; margin-left: 560px; background: #f4ff00; }

.sums {
  display: flex;
  height: 24px;
  flex: none;
  gap: 1px;
  padding: 2px 0 0 150px;
  background: linear-gradient(#f1f6fe, #d5e5fb);
  border-top: 1px solid #8aa9d4;
  border-left: 1px solid #8aa9d4;
}
.sum {
  height: 21px;
  padding-right: 3px;
  text-align: right;
  line-height: 20px;
  color: #15308a;
  background: #e6f0fd;
  border: 1px solid #9cbde8;
}
.grid-foot.low { border-left: 1px solid #8aa9d4; border-bottom: 1px solid #a9c0e0; }
.low-nav { padding-left: 1px; }

/* red callouts */
.badge {
  position: absolute;
  display: flex;
  align-items: center;
  justify-content: center;
  width: 29px;
  height: 29px;
  border-radius: 50%;
  background: #f00;
  color: #fff;
  font-family: "Liberation Sans", sans-serif;
  font-size: 19px;
  z-index: 3;
}
.b1 { left: 780px; top: 20px; }
.b2 { left: 192px; top: 296px; }
.b3 { left: 184px; top: 339px; }
.b4 { left: 204px; top: 442px; }
.b5 { left: 339px; top: 329px; }
.b6 { left: 899px; top: 309px; }
.b7 { left: 1007px; top: 309px; }
.b8 { left: 1119px; top: 309px; }
.b9 { left: 1216px; top: 309px; }

.frame { position: absolute; border: 3px solid #f00; height: 23px; z-index: 2; top: 334px; }
.f6 { left: 922px; width: 88px; }
.f7 { left: 1012px; width: 101px; }
.f8 { left: 1134px; width: 81px; }
.f9 { left: 1220px; width: 96px; }
</style>
